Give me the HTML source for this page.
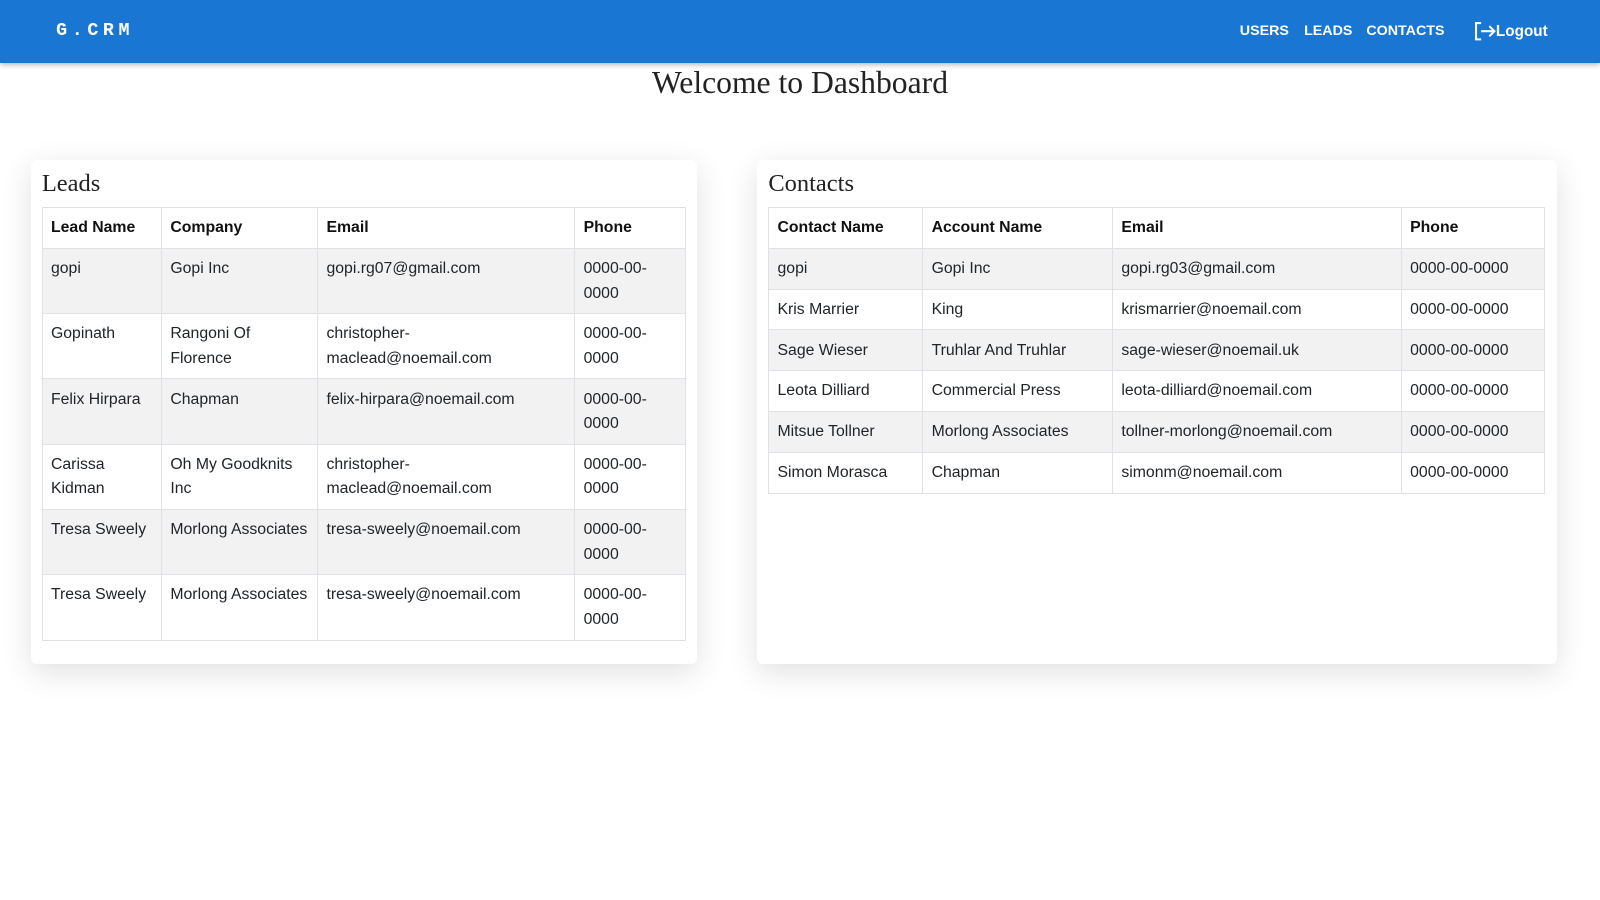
<!DOCTYPE html>
<html><head><meta charset="utf-8"><style>
*{box-sizing:border-box;margin:0;padding:0}
body{width:1600px;height:900px;background:#fff;font-family:"Liberation Sans",sans-serif;color:#212529;overflow:hidden}
.wrap{position:relative;width:1568px;height:882px;zoom:1.0204}
.nav{position:absolute;left:0;top:0;width:1568px;height:62px;background:#1976d2;box-shadow:0 2px 5px rgba(0,0,0,.3)}
.logo{position:absolute;left:55px;top:20px;font-family:"Liberation Mono",monospace;font-weight:bold;color:#fff;font-size:18px;letter-spacing:4.5px}
.nl{position:absolute;top:23px;color:#fff;font-weight:bold;font-size:14px}
h1{position:absolute;left:0;width:1568px;text-align:center;top:64px;font-family:"Liberation Serif",serif;font-weight:normal;font-size:31px;color:#222}
.card{position:absolute;top:157px;height:494px;background:#fff;border-radius:6px;box-shadow:0 8px 30px rgba(0,0,0,.12)}
.card h2{position:absolute;left:11px;top:10px;font-family:"Liberation Serif",serif;font-weight:normal;font-size:24px;color:#222}
table{position:absolute;left:11px;top:46px;border-collapse:collapse;table-layout:fixed;font-size:15.5px}
td,th{border:1px solid #dee2e6;padding:8px 8px 7px;line-height:24px;text-align:left;vertical-align:top;white-space:nowrap;overflow:hidden}
th{font-weight:bold;color:#111}
tbody tr:nth-child(odd){background:#f2f2f2}
</style></head><body><div class="wrap">
<div class="nav">
<div class="logo">G.CRM</div>
<div class="nl" style="left:1215px">USERS</div>
<div class="nl" style="left:1278px">LEADS</div>
<div class="nl" style="left:1339px">CONTACTS</div>
<svg style="position:absolute;left:1445px;top:21px" width="22" height="20" viewBox="0 0 22 20" fill="none" stroke="#fff" stroke-width="2"><path d="M7 2H2v16h5M7 10h13M15 5l5 5-5 5"/></svg>
<div class="nl" style="left:1466px;font-size:15px;top:23px">Logout</div>
</div>
<h1>Welcome to Dashboard</h1>
<div class="card" style="left:30px;width:653px">
<h2>Leads</h2>
<table style="width:630px">
<colgroup><col style="width:117px"><col style="width:153px"><col style="width:252px"><col style="width:108px"></colgroup>
<thead><tr><th>Lead Name</th><th>Company</th><th>Email</th><th>Phone</th></tr></thead>
<tbody>
<tr><td>gopi<br>&nbsp;</td><td>Gopi Inc</td><td>gopi.rg07@gmail.com</td><td>0000-00-<br>0000</td></tr>
<tr><td>Gopinath</td><td>Rangoni Of<br>Florence</td><td>christopher-<br>maclead@noemail.com</td><td>0000-00-<br>0000</td></tr>
<tr><td>Felix Hirpara</td><td>Chapman</td><td>felix-hirpara@noemail.com</td><td>0000-00-<br>0000</td></tr>
<tr><td>Carissa<br>Kidman</td><td>Oh My Goodknits<br>Inc</td><td>christopher-<br>maclead@noemail.com</td><td>0000-00-<br>0000</td></tr>
<tr><td>Tresa Sweely</td><td>Morlong Associates</td><td>tresa-sweely@noemail.com</td><td>0000-00-<br>0000</td></tr>
<tr><td>Tresa Sweely</td><td>Morlong Associates</td><td>tresa-sweely@noemail.com</td><td>0000-00-<br>0000</td></tr>
</tbody></table>
</div>
<div class="card" style="left:742px;width:784px">
<h2>Contacts</h2>
<table style="width:760px">
<colgroup><col style="width:151px"><col style="width:186px"><col style="width:283px"><col style="width:140px"></colgroup>
<thead><tr><th>Contact Name</th><th>Account Name</th><th>Email</th><th>Phone</th></tr></thead>
<tbody>
<tr><td>gopi</td><td>Gopi Inc</td><td>gopi.rg03@gmail.com</td><td>0000-00-0000</td></tr>
<tr><td>Kris Marrier</td><td>King</td><td>krismarrier@noemail.com</td><td>0000-00-0000</td></tr>
<tr><td>Sage Wieser</td><td>Truhlar And Truhlar</td><td>sage-wieser@noemail.uk</td><td>0000-00-0000</td></tr>
<tr><td>Leota Dilliard</td><td>Commercial Press</td><td>leota-dilliard@noemail.com</td><td>0000-00-0000</td></tr>
<tr><td>Mitsue Tollner</td><td>Morlong Associates</td><td>tollner-morlong@noemail.com</td><td>0000-00-0000</td></tr>
<tr><td>Simon Morasca</td><td>Chapman</td><td>simonm@noemail.com</td><td>0000-00-0000</td></tr>
</tbody></table>
</div>
</div></body></html>
